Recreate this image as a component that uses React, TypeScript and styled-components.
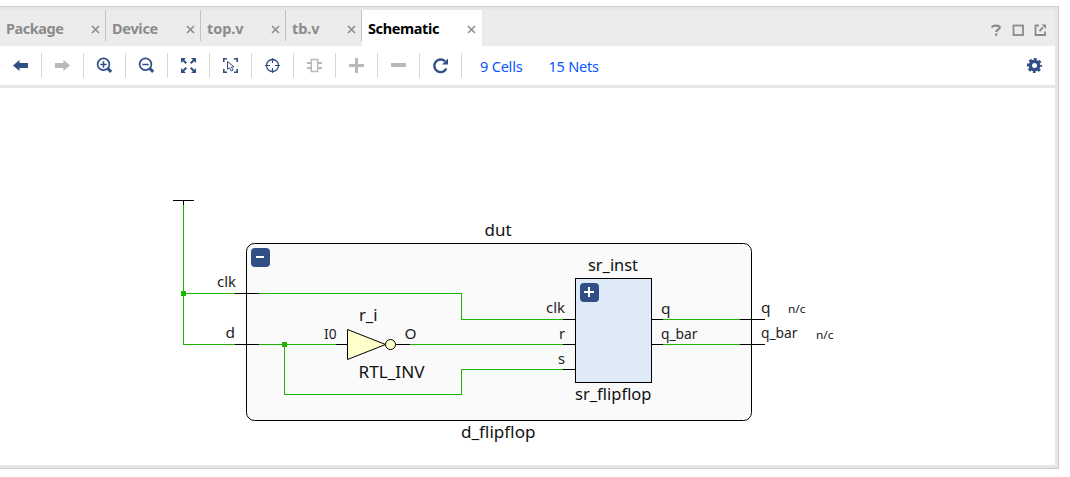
import React from "react";
import styled, { createGlobalStyle } from "styled-components";

const GlobalStyle = createGlobalStyle`
  * { box-sizing: border-box; }
  body { margin: 0; background: #fff; font-family: "Noto Sans", "Open Sans", sans-serif; }
`;

const NAVY = "#324f85";
const GREEN = "#1eb400";
const DISABLED = "#b9b9b9";

const Page = styled.div`
  width: 1070px;
  height: 477px;
  padding-top: 6px;
  background: #fff;
  overflow: hidden;
`;

const Panel = styled.section`
  width: 1059px;
  height: 463px;
  display: flex;
  flex-direction: column;
  border: solid #cbcdcb;
  border-width: 1px 1px 1px 0;
  padding: 3px 3px 3px 0;
  background: #e6e6e6;
`;

const TabBar = styled.div`
  display: flex;
  height: 36px;
  flex: none;
  background: #ececec;
`;

const Tab = styled.div<{ $width: number; $active?: boolean; $divider?: boolean }>`
  display: flex;
  justify-content: space-between;
  align-items: center;
  width: ${(p) => p.$width}px;
  height: 36px;
  padding: 0 6.5px 0 6px;
  background: ${(p) =>
    p.$active
      ? "#fff"
      : p.$divider
        ? "linear-gradient(#c3c3c3, #c3c3c3) right top / 1px 31px no-repeat"
        : "none"};
  color: ${(p) => (p.$active ? "#000" : "#8b8b8b")};
`;

const TabLabel = styled.span<{ $spacing: number }>`
  font-size: 14.5px;
  font-weight: 700;
  line-height: 20px;
  white-space: nowrap;
  letter-spacing: ${(p) => p.$spacing}px;
`;

const CloseIcon = styled.svg`
  width: 9px;
  height: 9px;
  flex: none;
  margin-top: 2px;
`;

const WindowActions = styled.div`
  display: flex;
  align-items: center;
  gap: 10px;
  margin-left: auto;
  padding: 4px 9px 0 0;
`;

const Toolbar = styled.div`
  display: flex;
  align-items: center;
  height: 39px;
  flex: none;
  background: #fff;
`;

const ToolButton = styled.span`
  display: flex;
  align-items: center;
  justify-content: center;
  width: 42px;
  height: 25px;
  border-right: 1px solid #d6d6d6;
`;

const Counts = styled.div`
  display: flex;
  gap: 26px;
  padding-left: 18px;
`;

const Count = styled.a`
  color: #0a55ff;
  font-size: 14.5px;
  letter-spacing: -0.2px;
  line-height: 20px;
  white-space: nowrap;
`;

const Settings = styled.span`
  display: flex;
  margin: 0 12px 0 auto;
`;

const Canvas = styled.main`
  flex: 1;
  min-height: 0;
  margin-top: 3px;
  background: #fff;
`;

const Drawing = styled.svg`
  display: block;
  width: 1055px;
  height: 377px;
`;

const Label = styled.text<{ $size: number; $color?: string }>`
  font-family: "Noto Sans", "Open Sans", sans-serif;
  font-size: ${(p) => p.$size}px;
  fill: ${(p) => p.$color || "#111"};
`;

const Icon = ({ children }: { children: React.ReactNode }) => (
  <svg width="17" height="17" viewBox="0 0 17 17" fill="none" stroke={NAVY}>
    {children}
  </svg>
);

const Arrow = ({ color, flip }: { color: string; flip?: boolean }) => (
  <Icon>
    <path
      d="M1 8.5L7.5 3V6H16V11H7.5V14Z"
      fill={color}
      stroke="none"
      transform={flip ? "translate(17 0) scale(-1 1)" : undefined}
    />
  </Icon>
);

const Magnifier = ({ plus }: { plus?: boolean }) => (
  <Icon>
    <circle cx="7.5" cy="7.2" r="5.9" strokeWidth="1.7" />
    <path d="M11.8 11.5L15.2 14.9" strokeWidth="3" />
    <path d={plus ? "M4.3 7.5H10.7M7.5 4.3V10.7" : "M4.3 7.5H10.7"} strokeWidth="1.5" />
  </Icon>
);

const tools: React.ReactNode[] = [
  <Arrow color={NAVY} />,
  <Arrow color={DISABLED} flip />,
  <Magnifier plus />,
  <Magnifier />,
  <Icon>
    <path
      d="M1 1H6L1 6ZM16 1V6L11 1ZM1 16V11L6 16ZM16 16H11L16 11Z"
      fill={NAVY}
      stroke="none"
    />
    <path d="M3 3L6.3 6.3M14 3L10.7 6.3M3 14L6.3 10.7M14 14L10.7 10.7" strokeWidth="2" />
  </Icon>,
  <Icon>
    <path d="M1.8 5V1.8H5M12 1.8H15.2V5M1.8 12V15.2H5M12 15.2H15.2V12" strokeWidth="1.6" />
    <path d="M5.5 4.5V12.2L7.5 10.8L9.2 14L11 13L9.4 10.2L12 9.8Z" strokeWidth="1" />
  </Icon>,
  <Icon>
    <circle cx="8.5" cy="8.5" r="6" strokeWidth="1.3" />
    <path d="M8.5 1V6M8.5 11V16M1 8.5H6M11 8.5H16" strokeWidth="1.2" />
  </Icon>,
  <Icon>
    <g stroke={DISABLED}>
      <path d="M5.3 2.5H11.7V14.5H5.3Z" strokeWidth="1.5" />
      <path d="M1 6H5M1 11H5M12 6H16M12 11H16" strokeWidth="2" />
    </g>
  </Icon>,
  <Icon>
    <path d="M1 8.5H16M8.5 1V16" stroke={DISABLED} strokeWidth="3" />
  </Icon>,
  <Icon>
    <path d="M1 8H16" stroke={DISABLED} strokeWidth="4" />
  </Icon>,
  <Icon>
    <path d="M14.3 11.5A6.3 6.3 0 1 1 12.9 4.2" strokeWidth="2.4" />
    <path d="M16 1.5V7.5H10Z" fill={NAVY} stroke="none" />
  </Icon>,
];

const tabs = [
  { name: "Package", width: 106, spacing: -0.45 },
  { name: "Device", width: 95, spacing: -0.3 },
  { name: "top.v", width: 85, spacing: -0.1 },
  { name: "tb.v", width: 76, spacing: -0.1 },
  { name: "Schematic", width: 120, spacing: -0.38, active: true },
];

type LabelSpec = [text: string, x: number, y: number, width: number, size: number, color?: string];

const labels: LabelSpec[] = [
  ["dut", 484.5, 236, 27, 17],
  ["sr_inst", 588, 271, 50, 17],
  ["sr_flipflop", 575, 400, 76.5, 17],
  ["d_flipflop", 461, 438, 74.5, 17],
  ["r_i", 359, 321, 18.5, 17],
  ["RTL_INV", 358.5, 378, 66, 16.5],
  ["clk", 217, 287, 19, 15, "#222"],
  ["d", 225.5, 338, 9.5, 15, "#222"],
  ["I0", 324, 339, 12.5, 15, "#222"],
  ["O", 404.5, 339, 12, 15, "#222"],
  ["clk", 546, 313, 19, 15, "#222"],
  ["r", 559, 339, 6, 15, "#222"],
  ["s", 558, 364, 7, 15, "#222"],
  ["q", 661, 313.5, 9.5, 15, "#222"],
  ["q_bar", 661, 339, 36.5, 15, "#222"],
  ["q", 761, 312.5, 9.5, 15, "#222"],
  ["q_bar", 761, 338, 36.5, 15, "#222"],
  ["n/c", 788, 313, 17.5, 11.5],
  ["n/c", 816, 339, 17.5, 11.5],
];

const HierarchyToggle = ({ x, y, plus }: { x: number; y: number; plus?: boolean }) => (
  <g transform={`translate(${x} ${y})`}>
    <rect width="19" height="19" rx="4" fill={NAVY} />
    <path d={plus ? "M4 9H14M9 4V14" : "M5 9H13"} stroke="#fff" strokeWidth="2" />
  </g>
);

const Schematic = () => (
  <Drawing viewBox="0 88 1055 377">
    <rect x="246.5" y="243.5" width="505" height="177" rx="8" fill="#fafafa" stroke="#000" />
    <g fill="none" stroke={GREEN} shapeRendering="crispEdges">
      <path d="M183.5 205V344.5H235M183.5 293.5H235" />
      <path d="M259 293.5H461.5V319.5H563" />
      <path d="M259 344.5H336M284.5 344.5V394.5H461.5V369.5H563" />
      <path d="M409 344.5H563M663 319.5H740M663 344.5H740" />
    </g>
    <path d="M181 291h5v5h-5zM282 342h5v5h-5z" fill={GREEN} />
    <rect x="575.5" y="278.5" width="76" height="104" fill="#deeaf8" stroke="#000" />
    <path
      d="M173 200.5H194M183.5 200V205M235 293.5H259M235 344.5H259M336 344.5H347M396 344.5H410M563 319.5H575M563 344.5H575M563 369.5H575M652 319.5H663M652 344.5H663M740 319.5H765M740 344.5H765"
      fill="none"
      stroke="#000"
      shapeRendering="crispEdges"
    />
    <path d="M347.5 329.5L385.5 344.5L347.5 359.5Z" fill="#ffffcc" stroke="#000" />
    <circle cx="390.5" cy="344.5" r="5" fill="#ffffcc" stroke="#000" />
    <HierarchyToggle x={251} y={248} />
    <HierarchyToggle x={580} y={283} plus />
    {labels.map(([text, x, y, width, size, color], i) => (
      <Label key={i} x={x} y={y} textLength={width} lengthAdjust="spacingAndGlyphs" $size={size} $color={color}>
        {text}
      </Label>
    ))}
  </Drawing>
);

export default function App() {
  return (
    <Page>
      <GlobalStyle />
      <Panel>
        <TabBar>
          {tabs.map((tab, i) => (
            <Tab key={tab.name} $width={tab.width} $active={tab.active} $divider={i < 4}>
              <TabLabel $spacing={tab.spacing}>{tab.name}</TabLabel>
              <CloseIcon viewBox="0 0 9 9">
                <path d="M1 1L8 8M8 1L1 8" stroke="#8b8b8b" strokeWidth="1.5" />
              </CloseIcon>
            </Tab>
          ))}
          <WindowActions>
            <svg width="12" height="12" viewBox="0 0 12 12">
              <path d="M2 3.5C2.5 .9 9.8 .9 9.8 3.5C9.8 5.5 6.2 5.5 6.2 8" fill="none" stroke="#8b8b8b" strokeWidth="2.2" />
              <path d="M5 9.5h2.400V11.7H5z" fill="#8b8b8b" />
            </svg>
            <svg width="12" height="12" viewBox="0 0 12 12">
              <rect x="1.5" y="1.5" width="9.5" height="9.5" fill="none" stroke="#8b8b8b" strokeWidth="1.8" />
            </svg>
            <svg width="12" height="12" viewBox="0 0 12 12">
              <path d="M5 1.5H1.5V11H11V7.5M5.5 7L9 3.5" fill="none" stroke="#8b8b8b" strokeWidth="1.8" />
              <path d="M7.5 .5H12V5Z" fill="#8b8b8b" />
            </svg>
          </WindowActions>
        </TabBar>
        <Toolbar>
          {tools.map((tool, i) => (
            <ToolButton key={i}>{tool}</ToolButton>
          ))}
          <Counts>
            <Count>9 Cells</Count>
            <Count>15 Nets</Count>
          </Counts>
          <Settings>
            <Icon>
              <circle cx="8.5" cy="8.5" r="4.2" strokeWidth="3.4" />
              <circle cx="8.5" cy="8.5" r="6.5" strokeWidth="2.2" strokeDasharray="2.8 2.305" strokeDashoffset="1.4" />
            </Icon>
          </Settings>
        </Toolbar>
        <Canvas>
          <Schematic />
        </Canvas>
      </Panel>
    </Page>
  );
}
